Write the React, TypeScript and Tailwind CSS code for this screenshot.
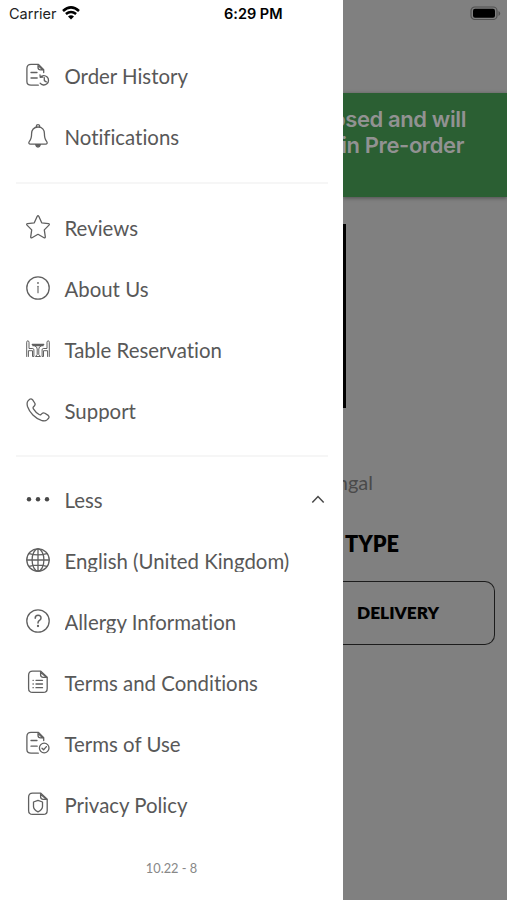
import React from 'react'

type IconProps = {
  children: React.ReactNode;
}

const Icon = ({ children }: IconProps) => (
  <svg
    className="h-6 w-6 shrink-0"
    viewBox="0 0 24 24"
    fill="none"
    stroke="#606060"
    strokeWidth="1.300"
    strokeLinecap="round"
    strokeLinejoin="round"
  >
    {children}
  </svg>
)

const OrderIcon = () => (
  <Icon>
    <path d="M12.300 22.200H5Q.9 22.200.9 18.500V5.400Q.9 1.400 5 1.400h7.500l5.200 5.400v2.700" />
    <path d="M12 1.600v2.600q0 2.600 2.600 2.600h2.600M12 2.500l5 4.600M5 9.500h6M5 15h6.200" />
    <path d="M14.300 14.200a4.700 4.700 0 1 1-.2 6M14 11.800l.3 2.600 2.500-.2M18.300 14.600v3l2 1.300" />
  </Icon>
)

const BellIcon = () => (
  <Icon>
    <path d="M10.400 3V2a1.600 1.300 0 0 1 3.200 0v1" />
    <path d="M12 3c-4.300 0-6.400 3.200-6.400 6.600 0 4.400-.5 6-2.200 7.800-1 1.100-.7 2.800 1.200 2.800h14.800c1.900 0 2.200-1.700 1.200-2.800-1.700-1.800-2.200-3.400-2.200-7.800C18.400 6.200 16.300 3 12 3Z" />
    <path d="M9.600 20.700q.6 2.400 2.400 2.400t2.400-2.400Z" fill="#606060" />
  </Icon>
)

const StarIcon = () => (
  <Icon>
    <path d="M11.100 1.500q.9-1.500 1.800 0l2.800 6.300 6.700.8q1.500.3.6 1.500l-4.700 4.800 1 6.900q.1 1.500-1.300.9L12 19.300l-6 3.400q-1.400.6-1.300-.9l1-6.900L1 10.100q-.9-1.200.6-1.500l6.700-.8Z" />
  </Icon>
)

const InfoIcon = () => (
  <Icon>
    <circle cx="12" cy="12" r="11.200" />
    <path d="M12 10.200v6.600" strokeWidth="1.100" />
    <circle cx="12" cy="7" r=".3" />
  </Icon>
)

const TableIcon = () => (
  <Icon>
    <g strokeWidth="1">
      <path d="M.7 19.500V5.200q.1-1.400 1.100-1.400t1.200 1.400v6.300h3.800q1.100.2 1.100 1.300v6.700H6.500v-5.800H2.400v5.800" />
      <path d="M23.300 19.500V5.200q-.1-1.400-1.100-1.400T21 5.200v6.300h-3.800q-1.100.2-1.100 1.300v6.700h1.400v-5.800h4.100v5.800" />
      <path d="M6.300 7.500h11.400M7 8.700h10" strokeWidth="1.300" />
      <path d="M9 9q2.200.5 2.200 3v5.500l-1.700 2h5l-1.700-2V12q0-2.500 2.200-3" />
    </g>
  </Icon>
)

const PhoneIcon = () => (
  <Icon>
    <path d="M2 2.900 3.700 1.300q1.500-1 2.800.4L8.700 5q1 1.700-.4 3l-1 1q-.5.9.1 1.800 2.200 3.500 5.700 5.700 1 .6 1.800.1l1-1q1.300-1.300 3-.4l3.300 2.200q1.400 1.300.4 2.800L21 21.900q-1.800 1.700-5.600.5Q10.600 20.700 6.900 17T1.500 8.500Q.5 4.700 2 2.900Z" />
  </Icon>
)

const DotsIcon = () => (
  <Icon>
    <g fill="#484848" stroke="none">
      <circle cx="3" cy="12.300" r="2.200" />
      <circle cx="12" cy="12.300" r="2.200" />
      <circle cx="21" cy="12.300" r="2.200" />
    </g>
  </Icon>
)

const GlobeIcon = () => (
  <Icon>
    <circle cx="12" cy="12" r="11.200" />
    <ellipse cx="12" cy="12" rx="5.900" ry="11.200" />
    <path d="M12 .8v22.400M.8 12h22.400M3.200 5.600q8.800 2.600 17.600 0M3.200 18.400q8.800-2.600 17.600 0" />
  </Icon>
)

const HelpIcon = () => (
  <Icon>
    <circle cx="12" cy="12" r="11.200" />
    <path d="M9.200 9.200q0-2.900 2.900-2.900T15 9q0 1.500-1.500 2.400T12 13.900" strokeWidth="1.500" />
    <circle cx="12" cy="17" r=".5" fill="#606060" />
  </Icon>
)

const Page = () => (
  <>
    <path d="M6.600 1.200h8.200l6.400 6v11.200q0 4-4 4H6.600q-4 0-4-4V5.200q0-4 4-4Z" />
    <path d="M14.600 1.600v3.200q0 2.500 2.600 2.500h3.600M14.800 2.500l5.400 4.600" />
  </>
)

const TermsIcon = () => (
  <Icon>
    <Page />
    <path d="M10 10.300h6.500M10 14h6.500M10 17.700h6.500M7 10.300h.3M7 14h.3M7 17.700h.3" />
  </Icon>
)

const TermsOfUseIcon = () => (
  <Icon>
    <path d="M12.300 22.200H5Q.9 22.200.9 18.500V5.400Q.9 1.400 5 1.400h7.500l5.200 5.400v2.700" />
    <path d="M12 1.600v2.600q0 2.600 2.600 2.600h2.600M12 2.500l5 4.600M5 9.500h6M5 15.200h6.200" />
    <circle cx="18.200" cy="17" r="4.800" />
    <path d="m16 17.200 1.600 1.600 2.800-3.200" />
  </Icon>
)

const PrivacyIcon = () => (
  <Icon>
    <Page />
    <path d="m12 8.300 4.500 1.700v4.400q0 3.200-4.500 5.400-4.500-2.200-4.500-5.400V10Z" />
  </Icon>
)

type MenuEntry = {
  title: string;
  icon: React.ReactNode;
  clipped?: boolean;
  open?: boolean;
}

const ACCOUNT: MenuEntry[] = [
  { title: 'Order History', icon: <OrderIcon /> },
  { title: 'Notifications', icon: <BellIcon /> },
]

const RESTAURANT: MenuEntry[] = [
  { title: 'Reviews', icon: <StarIcon /> },
  { title: 'About Us', icon: <InfoIcon /> },
  { title: 'Table Reservation', icon: <TableIcon /> },
  { title: 'Support', icon: <PhoneIcon />, clipped: true },
]

const MORE: MenuEntry[] = [
  { title: 'Less', icon: <DotsIcon />, open: true },
  { title: 'English (United Kingdom)', icon: <GlobeIcon />, clipped: true },
  { title: 'Allergy Information', icon: <HelpIcon />, clipped: true },
  { title: 'Terms and Conditions', icon: <TermsIcon /> },
  { title: 'Terms of Use', icon: <TermsOfUseIcon /> },
  { title: 'Privacy Policy', icon: <PrivacyIcon /> },
]

const MenuItem = ({ title, icon, clipped, open }: MenuEntry) => (
  <li className="flex h-[61px] items-center pr-[18px] pl-[25.5px]">
    <span className="mb-[1.5px]">{icon}</span>
    <span className="ml-[15px] flex h-[26px] flex-1 flex-col">
      <span
        className={
          clipped
            ? 'h-[23.5px] overflow-hidden text-[20.4px] leading-[26px] whitespace-nowrap'
            : 'h-[26px] text-[20.4px] leading-[26px] whitespace-nowrap'
        }
      >
        {title}
      </span>
    </span>
    {open && (
      <svg className="mb-0.5 h-3.5 w-3.5" viewBox="0 0 14 14" fill="none" stroke="#484848" strokeWidth="1.500">
        <path d="m1.300 10.500 5.700-6 5.700 6" />
      </svg>
    )}
  </li>
)

const MenuGroup = ({ items }: { items: MenuEntry[] }) => (
  <ul>
    {items.map((item) => (
      <MenuItem key={item.title} {...item} />
    ))}
  </ul>
)

const Divider = () => <hr className="mr-[15px] ml-4 border-t-2 border-[#f6f6f6]" />

const Drawer = () => (
  <aside className="flex h-full w-[343px] shrink-0 flex-col bg-white text-[#585858]">
    <div className="flex h-[45.5px] items-start pt-1 pl-[9px] font-['Inter'] text-black">
      <span className="w-[53px] text-[14.5px] leading-5 text-[#222]">Carrier</span>
      <svg className="mt-[1.5px] h-[14px] w-[18px]" viewBox="0 0 18 14" fill="none" stroke="#000" strokeWidth="2.600">
        <path d="M1 4.900q8-7 16 0M3.900 8.100q5.100-4.200 10.200 0" />
        <path d="M6 10.500q3-2.300 6 0l-3 3Z" fill="#000" stroke="none" />
      </svg>
      <span className="ml-[144px] text-[14.5px] leading-5 font-semibold whitespace-nowrap">6:29 PM</span>
    </div>
    <MenuGroup items={ACCOUNT} />
    <div className="pt-3.5 pb-3.5">
      <Divider />
    </div>
    <MenuGroup items={RESTAURANT} />
    <div className="pt-[13px] pb-[13px]">
      <Divider />
    </div>
    <MenuGroup items={MORE} />
    <p className="mt-[22px] text-center text-[12.8px] leading-5 text-[#888]">10.22 - 8</p>
  </aside>
)

const Backdrop = () => (
  <main className="flex h-full flex-1 flex-col overflow-hidden bg-[#808080]">
    <div className="flex h-[93px] shrink-0 justify-end pt-[6px] pr-[6px]">
      <svg className="h-[15px] w-[31px]" viewBox="0 0 31 15">
        <rect x="1" y="1" width="26" height="12.500" rx="3.800" fill="none" stroke="#505050" strokeWidth="1.200" />
        <rect x="3" y="2.800" width="22" height="9" rx="2" fill="#000" />
        <path d="M28.500 5v5q1.700-.8 1.700-2.500T28.500 5Z" fill="#505050" />
      </svg>
    </div>
    <div className="flex h-[104px] shrink-0 flex-col items-end bg-[#2b5f33] pt-[13px] font-['Inter'] text-[22px] leading-[26px] font-semibold tracking-[-0.4px] whitespace-nowrap text-[#929292] shadow-[0_1px_4px_rgba(0,0,0,0.4)]">
      <span className="mr-[41px]">closed and will</span>
      <span className="mr-[43px]">open in Pre-order</span>
    </div>
    <div className="mt-[27px] h-[184px] w-[2.5px] shrink-0 bg-black" />
    <p className="mt-[62px] flex w-[30px] justify-end text-[20px] leading-6 text-[#4a4a4a]">Bengal</p>
    <h2 className="mt-[36px] flex w-14 justify-end text-[21.7px] leading-7 font-extrabold whitespace-nowrap text-black">ORDER TYPE</h2>
    <div className="mt-[23px] mr-3 flex h-16 shrink-0 items-center rounded-r-[10px] border-[1.5px] border-l-0 border-[#1c1c1c] pl-3.5 text-[17.3px] font-extrabold text-black">
      DELIVERY
    </div>
  </main>
)

const App = () => {
  return (
    <div className="flex h-[900px] w-[507px] overflow-hidden font-['Lato',sans-serif] [font-variant-ligatures:none]">
      <Drawer />
      <Backdrop />
    </div>
  )
}

export default App
